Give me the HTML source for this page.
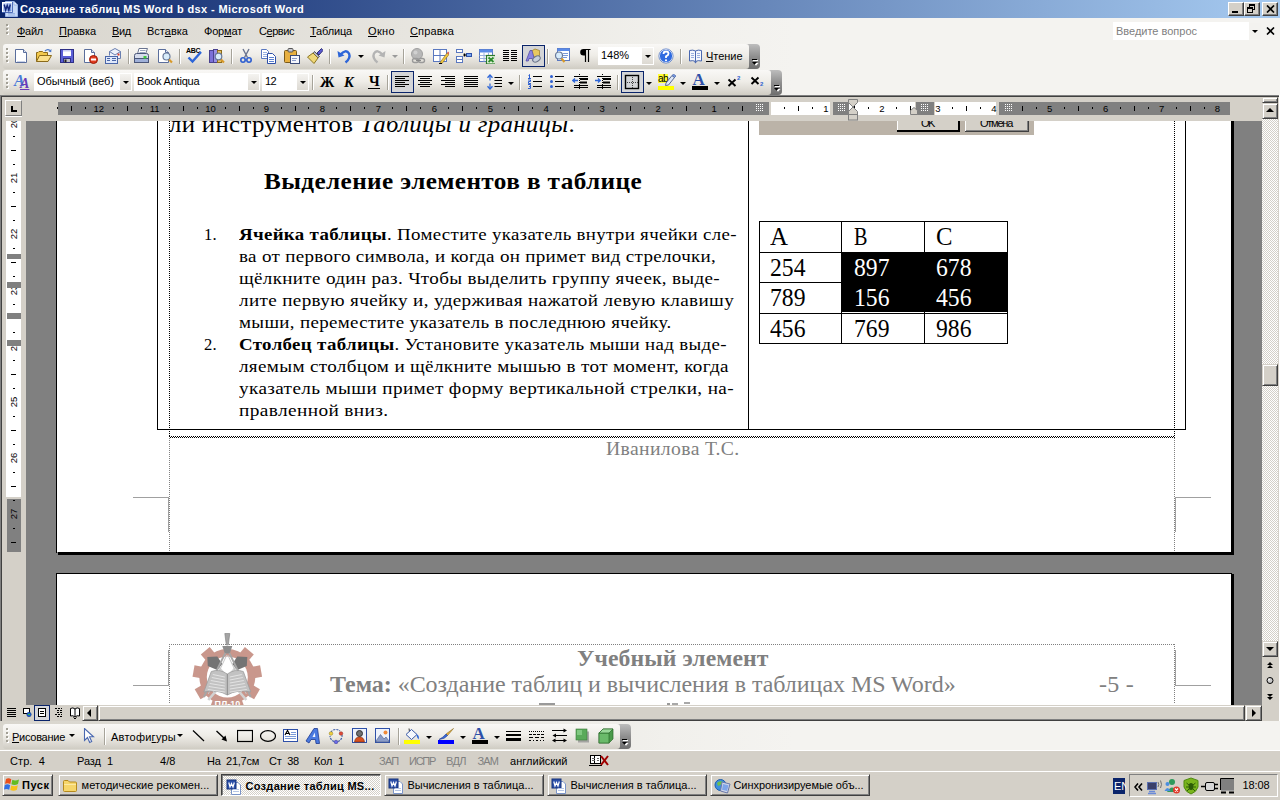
<!DOCTYPE html>
<html lang="ru"><head>
<meta charset="utf-8">
<title>Word</title>
<style>
*{box-sizing:border-box;margin:0;padding:0}
html,body{width:1280px;height:800px;overflow:hidden;background:#d4d0c8}
body{font-family:"Liberation Sans",sans-serif;font-size:11px;color:#000;position:relative}
#root{position:absolute;left:0;top:0;width:1280px;height:800px;overflow:hidden;background:#d4d0c8}
.a{position:absolute}
.t{position:absolute;white-space:nowrap;line-height:1}
.ui{font-family:"Liberation Sans",sans-serif;font-size:11px}
.sf{font-family:"Liberation Serif",serif}
u{text-decoration:underline;text-underline-offset:1px}
/* title */
#title{left:0;top:0;width:1280px;height:18px;background:linear-gradient(to right,#0a246a,#a6caf0)}
.wb{position:absolute;top:2px;width:16px;height:14px;background:#d4d0c8;border:1px solid;border-color:#fff #404040 #404040 #fff;box-shadow:inset -1px -1px 0 #808080}
/* dock */
#dock{left:0;top:18px;width:1280px;height:78px;background:linear-gradient(to right,#d8d5cd 0,#e6e4de 30%,#f1f0ec 52%,#f4f3f0 62%,#f4f3f0 100%)}
.tb{position:absolute;height:25px;border-radius:3px 4px 4px 3px;background:linear-gradient(to bottom,#f9f8f6 0,#efede8 45%,#dcd9d2 80%,#cfccc3 100%)}
.cap::before{content:"";position:absolute;left:-3px;top:0;width:6px;height:25px;border-radius:0 3px 3px 0;background:linear-gradient(to bottom,#f9f8f6 0,#efede8 45%,#dcd9d2 80%,#cfccc3 100%)}
.cap{position:absolute;top:0;right:0;width:14px;height:25px;border-radius:0 4px 4px 0;background:linear-gradient(to bottom,#bdbdbd 0,#8f8f8f 50%,#6e6e6e 100%)}
.grip{position:absolute;width:3px;height:15px;background:repeating-linear-gradient(to bottom,#a29f95 0,#a29f95 2px,transparent 2px,transparent 4px) 0 0/2px 100% no-repeat,repeating-linear-gradient(to bottom,#fff 0,#fff 2px,transparent 2px,transparent 4px) 1px 1px/2px 100% no-repeat}
.sep{position:absolute;width:2px;height:17px;border-left:1px solid #a6a399;border-right:1px solid #fff}
.combo{position:absolute;height:19px;background:#fff;border:0}
.dd{position:absolute;top:1px;right:1px;width:12px;height:17px;background:linear-gradient(to bottom,#f6f5f2,#dedbd4)}
.arr{position:absolute;width:0;height:0;border-left:3px solid transparent;border-right:3px solid transparent;border-top:3px solid #000}
.btn{background:#d4d0c8;border:1px solid;border-color:#d4d0c8 #404040 #404040 #d4d0c8;box-shadow:inset 1px 1px 0 #fff,inset -1px -1px 0 #808080}
/* doc */
#docwrap{left:0;top:95px;width:1280px;height:627px;background:#d4d0c8}
#gray{left:26px;top:121px;width:1236px;height:584px;background:#808080;overflow:hidden}
.page{position:absolute;background:#fff}
</style>
</head>
<body>
<div id="root">

<!-- TITLE BAR -->
<div id="title" class="a">
  <div class="t" style="left: 20px; top: 4px; font-size: 11px; font-weight: bold; color: rgb(255, 255, 255); --w: 284px; letter-spacing: 0.38px;">Создание таблиц MS Word b dsx - Microsoft Word</div>
  <svg class="a" style="left:2px;top:1px" width="16" height="16" viewBox="0 0 16 16"><defs><linearGradient id="wg" x1="0" y1="0" x2="1" y2="1"><stop offset="0" stop-color="#e8f0ff"></stop><stop offset="1" stop-color="#5a84dc"></stop></linearGradient></defs><path d="M3.500 0.500 H12 L15.500 4 V15.500 H3.500 Z" fill="#c6d8f6" stroke="#9ab4e6"></path><path d="M12 0.500 V4 H15.500" fill="#eef4ff" stroke="#9ab4e6"></path><path d="M6 12.500H13M6 14H13" stroke="#8aa8e0" stroke-width=".800"></path><rect x="0.500" y="1.500" width="9.500" height="9.500" fill="url(#wg)" stroke="#fff"></rect><path d="M2.200 3.500 L3.600 9 L5.200 4.500 L6.800 9 L8.300 3.500" stroke="#14287c" stroke-width="1.500" fill="none"></path><path d="M0 11.500 H10.500 V1" stroke="#2a4ea8" fill="none" stroke-width=".800"></path></svg>
  <div class="wb" style="left:1228px"><div class="a" style="left:3px;top:8px;width:6px;height:2px;background:#000"></div></div>
  <div class="wb" style="left:1244px"><div class="a" style="left:4px;top:1px;width:6px;height:6px;border:1px solid #000;border-top-width:2px"></div><div class="a" style="left:2px;top:4px;width:6px;height:6px;border:1px solid #000;border-top-width:2px;background:#d4d0c8"></div></div>
  <div class="wb" style="left:1262px"><svg class="a" style="left:3px;top:2px" width="9" height="8" viewBox="0 0 9 8"><path d="M1 0.500 L8 7.500 M8 0.500 L1 7.500" stroke="#000" stroke-width="1.700" fill="none"></path></svg></div>
</div>

<!-- DOCK (menu + toolbars) -->
<div id="dock" class="a">
  <!-- menu row (dock top=18) -->
  <div class="grip" style="left:6px;top:6px;height:12px"></div>
  <div class="t ui" style="left: 17px; top: 8px; --w: 26px; letter-spacing: -0.27px;"><u>Ф</u>айл</div><div class="t ui" style="left: 59px; top: 8px; --w: 37px; letter-spacing: -0.03px;"><u>П</u>равка</div><div class="t ui" style="left: 112px; top: 8px; --w: 19px; letter-spacing: -0.31px;"><u>В</u>ид</div><div class="t ui" style="left: 147px; top: 8px; --w: 41px; letter-spacing: 0.01px;">Вст<u>а</u>вка</div><div class="t ui" style="left: 204px; top: 8px; --w: 38px; letter-spacing: -0.18px;">Фор<u>м</u>ат</div><div class="t ui" style="left: 259px; top: 8px; --w: 35px; letter-spacing: -0.45px;">С<u>е</u>рвис</div><div class="t ui" style="left: 310px; top: 8px; --w: 42px; letter-spacing: -0.16px;"><u>Т</u>аблица</div><div class="t ui" style="left: 368px; top: 8px; --w: 27px; letter-spacing: 0.36px;"><u>О</u>кно</div><div class="t ui" style="left: 410px; top: 8px; --w: 44px; letter-spacing: 0.12px;"><u>С</u>правка</div>
  <div class="a" style="left:1113px;top:4px;width:136px;height:18px;background:#fff"></div>
  <div class="t ui" style="left: 1116px; top: 8px; color: rgb(128, 128, 128); --w: 81px; letter-spacing: -0.01px;">Введите вопрос</div>
  <div class="a" style="left:1249px;top:5px;width:12px;height:16px;background:#f3f2ef"></div>
  <div class="arr" style="left:1252px;top:12px"></div>
  <svg class="a" style="left:1266px;top:9px" width="9" height="8" viewBox="0 0 9 8"><path d="M1 0.5 L8 7.5 M8 0.5 L1 7.5" stroke="#000" stroke-width="1.6" fill="none"></path></svg>

  <!-- toolbar 1: abs y=44 => dock y=26 -->
  <div id="tb1" class="tb" style="left:3px;top:26px;width:757px">
    <div class="grip" style="left:3px;top:4px;height:16px"></div>
    <div class="cap"></div>
  </div>
  <!-- toolbar 2: abs y=70 => dock y=52 -->
  <div id="tb2" class="tb" style="left:3px;top:52px;width:779px">
    <div class="grip" style="left:3px;top:4px;height:16px"></div>
    <div class="cap"></div>
  </div>
</div>

<!-- DOCUMENT AREA -->
<div id="docwrap" class="a"></div>
<!-- DOC-START -->
<div class="a" style="left:0;top:95px;width:1280px;height:1px;background:#808080"></div>
<div class="a" style="left:1px;top:96px;width:1278px;height:1px;background:#404040"></div>
<div class="a" style="left:0;top:95px;width:1px;height:627px;background:#808080"></div>
<div class="a" style="left:1px;top:96px;width:1px;height:625px;background:#404040"></div>
<div class="a" style="left:1279px;top:95px;width:1px;height:627px;background:#fff"></div>
<div id="hruler" class="a" style="left:0;top:97px;width:1262px;height:24px;overflow:hidden">
<div class="a" style="left:5px;top:3px;width:17px;height:16px;border:1px solid;border-color:#fff #808080 #808080 #fff;background:#d4d0c8"></div>
<div class="a" style="left:11px;top:9px;width:2px;height:6px;background:#000"></div><div class="a" style="left:11px;top:13px;width:6px;height:2px;background:#000"></div><div class="a" style="left:5px;top:19px;width:17px;height:1px;background:#fff"></div><div class="a" style="left:57px;top:10px;width:1px;height:2px;background:#000"></div>
<div class="a" style="left:58px;top:5px;width:711px;height:13px;background:#808080"></div>
<div class="a" style="left:771px;top:5px;width:59px;height:13px;background:#fff"></div>
<div class="a" style="left:833px;top:5px;width:16px;height:13px;background:#808080"></div>
<div class="a" style="left:849px;top:5px;width:66px;height:13px;background:#fff"></div>
<div class="a" style="left:916px;top:5px;width:18px;height:13px;background:#808080"></div>
<div class="a" style="left:935px;top:5px;width:61px;height:13px;background:#fff"></div>
<div class="a" style="left:999px;top:5px;width:231px;height:13px;background:#808080"></div>
<div class="a" style="left:71px;top:9px;width:1px;height:5px;background:#000"></div>
<div class="a" style="left:85px;top:10px;width:1px;height:2px;background:#000"></div>
<div class="t ui" style="left:88.7px;top:7px;width:20px;text-align:center;font-size:9.500px">12</div>
<div class="a" style="left:113px;top:10px;width:1px;height:2px;background:#000"></div>
<div class="a" style="left:127px;top:9px;width:1px;height:5px;background:#000"></div>
<div class="a" style="left:141px;top:10px;width:1px;height:2px;background:#000"></div>
<div class="t ui" style="left:144.7px;top:7px;width:20px;text-align:center;font-size:9.500px">11</div>
<div class="a" style="left:169px;top:10px;width:1px;height:2px;background:#000"></div>
<div class="a" style="left:183px;top:9px;width:1px;height:5px;background:#000"></div>
<div class="a" style="left:197px;top:10px;width:1px;height:2px;background:#000"></div>
<div class="t ui" style="left:200.6px;top:7px;width:20px;text-align:center;font-size:9.500px">10</div>
<div class="a" style="left:225px;top:10px;width:1px;height:2px;background:#000"></div>
<div class="a" style="left:239px;top:9px;width:1px;height:5px;background:#000"></div>
<div class="a" style="left:253px;top:10px;width:1px;height:2px;background:#000"></div>
<div class="t ui" style="left:256.5px;top:7px;width:20px;text-align:center;font-size:9.500px">9</div>
<div class="a" style="left:281px;top:10px;width:1px;height:2px;background:#000"></div>
<div class="a" style="left:295px;top:9px;width:1px;height:5px;background:#000"></div>
<div class="a" style="left:308px;top:10px;width:1px;height:2px;background:#000"></div>
<div class="t ui" style="left:312.5px;top:7px;width:20px;text-align:center;font-size:9.500px">8</div>
<div class="a" style="left:336px;top:10px;width:1px;height:2px;background:#000"></div>
<div class="a" style="left:350px;top:9px;width:1px;height:5px;background:#000"></div>
<div class="a" style="left:364px;top:10px;width:1px;height:2px;background:#000"></div>
<div class="t ui" style="left:368.4px;top:7px;width:20px;text-align:center;font-size:9.500px">7</div>
<div class="a" style="left:392px;top:10px;width:1px;height:2px;background:#000"></div>
<div class="a" style="left:406px;top:9px;width:1px;height:5px;background:#000"></div>
<div class="a" style="left:420px;top:10px;width:1px;height:2px;background:#000"></div>
<div class="t ui" style="left:424.4px;top:7px;width:20px;text-align:center;font-size:9.500px">6</div>
<div class="a" style="left:448px;top:10px;width:1px;height:2px;background:#000"></div>
<div class="a" style="left:462px;top:9px;width:1px;height:5px;background:#000"></div>
<div class="a" style="left:476px;top:10px;width:1px;height:2px;background:#000"></div>
<div class="t ui" style="left:480.3px;top:7px;width:20px;text-align:center;font-size:9.500px">5</div>
<div class="a" style="left:504px;top:10px;width:1px;height:2px;background:#000"></div>
<div class="a" style="left:518px;top:9px;width:1px;height:5px;background:#000"></div>
<div class="a" style="left:532px;top:10px;width:1px;height:2px;background:#000"></div>
<div class="t ui" style="left:536.2px;top:7px;width:20px;text-align:center;font-size:9.500px">4</div>
<div class="a" style="left:560px;top:10px;width:1px;height:2px;background:#000"></div>
<div class="a" style="left:574px;top:9px;width:1px;height:5px;background:#000"></div>
<div class="a" style="left:588px;top:10px;width:1px;height:2px;background:#000"></div>
<div class="t ui" style="left:592.2px;top:7px;width:20px;text-align:center;font-size:9.500px">3</div>
<div class="a" style="left:616px;top:10px;width:1px;height:2px;background:#000"></div>
<div class="a" style="left:630px;top:9px;width:1px;height:5px;background:#000"></div>
<div class="a" style="left:644px;top:10px;width:1px;height:2px;background:#000"></div>
<div class="t ui" style="left:648.1px;top:7px;width:20px;text-align:center;font-size:9.500px">2</div>
<div class="a" style="left:672px;top:10px;width:1px;height:2px;background:#000"></div>
<div class="a" style="left:686px;top:9px;width:1px;height:5px;background:#000"></div>
<div class="a" style="left:700px;top:10px;width:1px;height:2px;background:#000"></div>
<div class="t ui" style="left:704.1px;top:7px;width:20px;text-align:center;font-size:9.500px">1</div>
<div class="a" style="left:728px;top:10px;width:1px;height:2px;background:#000"></div>
<div class="a" style="left:742px;top:9px;width:1px;height:5px;background:#000"></div>
<div class="a" style="left:756px;top:10px;width:1px;height:2px;background:#000"></div>
<div class="a" style="left:784px;top:10px;width:1px;height:2px;background:#000"></div>
<div class="a" style="left:798px;top:9px;width:1px;height:5px;background:#000"></div>
<div class="a" style="left:812px;top:10px;width:1px;height:2px;background:#000"></div>
<div class="t ui" style="left:815.9px;top:7px;width:20px;text-align:center;font-size:9.500px">1</div>
<div class="a" style="left:840px;top:10px;width:1px;height:2px;background:#000"></div>
<div class="a" style="left:854px;top:9px;width:1px;height:5px;background:#000"></div>
<div class="a" style="left:868px;top:10px;width:1px;height:2px;background:#000"></div>
<div class="t ui" style="left:871.9px;top:7px;width:20px;text-align:center;font-size:9.500px">2</div>
<div class="a" style="left:896px;top:10px;width:1px;height:2px;background:#000"></div>
<div class="a" style="left:910px;top:9px;width:1px;height:5px;background:#000"></div>
<div class="a" style="left:924px;top:10px;width:1px;height:2px;background:#000"></div>
<div class="t ui" style="left:927.8px;top:7px;width:20px;text-align:center;font-size:9.500px">3</div>
<div class="a" style="left:952px;top:10px;width:1px;height:2px;background:#000"></div>
<div class="a" style="left:966px;top:9px;width:1px;height:5px;background:#000"></div>
<div class="a" style="left:980px;top:10px;width:1px;height:2px;background:#000"></div>
<div class="t ui" style="left:983.8px;top:7px;width:20px;text-align:center;font-size:9.500px">4</div>
<div class="a" style="left:1008px;top:10px;width:1px;height:2px;background:#000"></div>
<div class="a" style="left:1022px;top:9px;width:1px;height:5px;background:#000"></div>
<div class="a" style="left:1036px;top:10px;width:1px;height:2px;background:#000"></div>
<div class="t ui" style="left:1039.7px;top:7px;width:20px;text-align:center;font-size:9.500px">5</div>
<div class="a" style="left:1064px;top:10px;width:1px;height:2px;background:#000"></div>
<div class="a" style="left:1078px;top:9px;width:1px;height:5px;background:#000"></div>
<div class="a" style="left:1092px;top:10px;width:1px;height:2px;background:#000"></div>
<div class="t ui" style="left:1095.6px;top:7px;width:20px;text-align:center;font-size:9.500px">6</div>
<div class="a" style="left:1120px;top:10px;width:1px;height:2px;background:#000"></div>
<div class="a" style="left:1134px;top:9px;width:1px;height:5px;background:#000"></div>
<div class="a" style="left:1148px;top:10px;width:1px;height:2px;background:#000"></div>
<div class="t ui" style="left:1151.6px;top:7px;width:20px;text-align:center;font-size:9.500px">7</div>
<div class="a" style="left:1176px;top:10px;width:1px;height:2px;background:#000"></div>
<div class="a" style="left:1190px;top:9px;width:1px;height:5px;background:#000"></div>
<div class="a" style="left:1204px;top:10px;width:1px;height:2px;background:#000"></div>
<div class="t ui" style="left:1207.5px;top:7px;width:20px;text-align:center;font-size:9.500px">8</div>
<div class="a" style="left:756px;top:7px;width:8px;height:8px;background:conic-gradient(from 270deg,#fff 25%,#808080 0) 0 0/2px 2px"></div>
<div class="a" style="left:838px;top:7px;width:8px;height:8px;background:conic-gradient(from 270deg,#fff 25%,#808080 0) 0 0/2px 2px"></div>
<div class="a" style="left:921px;top:7px;width:8px;height:8px;background:conic-gradient(from 270deg,#fff 25%,#808080 0) 0 0/2px 2px"></div>
<div class="a" style="left:1005px;top:7px;width:8px;height:8px;background:conic-gradient(from 270deg,#fff 25%,#808080 0) 0 0/2px 2px"></div>
<svg class="a" style="left:848px;top:2px" width="11" height="22" viewBox="0 0 11 22"><path d="M0.5 0.5 H9.5 V3.5 L5 8 L9.5 12.5 V15.5 H0.5 V12.5 L5 8 L0.5 3.5 Z" fill="#d4d0c8" stroke="#808080"></path><rect x="0.5" y="15.5" width="9" height="5.5" fill="#d4d0c8" stroke="#808080"></rect></svg>
<svg class="a" style="left:910px;top:10px" width="9" height="8" viewBox="0 0 9 8"><path d="M0.5 7.5 V3.5 L4 0.5 L7.5 3.5 V7.5 Z" fill="#d4d0c8" stroke="#808080"></path></svg>
</div>
<div id="vruler" class="a" style="left:2px;top:121px;width:24px;height:584px;overflow:hidden">
<div class="a" style="left:4px;top:0;width:15px;height:376px;background:#fff"></div>
<div class="a" style="left:5px;top:378px;width:14px;height:53px;background:#808080"></div>
<div class="t ui" style="left:1.5px;top:-4.5px;width:20px;height:12px;line-height:12px;text-align:center;font-size:9.500px;transform:rotate(-90deg)">20</div>
<div class="a" style="left:11px;top:15px;width:2px;height:1px;background:#000"></div>
<div class="a" style="left:9px;top:29px;width:5px;height:1px;background:#000"></div>
<div class="a" style="left:11px;top:43px;width:2px;height:1px;background:#000"></div>
<div class="t ui" style="left:1.5px;top:51.4px;width:20px;height:12px;line-height:12px;text-align:center;font-size:9.500px;transform:rotate(-90deg)">21</div>
<div class="a" style="left:11px;top:71px;width:2px;height:1px;background:#000"></div>
<div class="a" style="left:9px;top:85px;width:5px;height:1px;background:#000"></div>
<div class="a" style="left:11px;top:99px;width:2px;height:1px;background:#000"></div>
<div class="t ui" style="left:1.5px;top:107.4px;width:20px;height:12px;line-height:12px;text-align:center;font-size:9.500px;transform:rotate(-90deg)">22</div>
<div class="a" style="left:11px;top:127px;width:2px;height:1px;background:#000"></div>
<div class="a" style="left:9px;top:141px;width:5px;height:1px;background:#000"></div>
<div class="a" style="left:11px;top:155px;width:2px;height:1px;background:#000"></div>
<div class="t ui" style="left:1.5px;top:163.3px;width:20px;height:12px;line-height:12px;text-align:center;font-size:9.500px;transform:rotate(-90deg)">23</div>
<div class="a" style="left:11px;top:183px;width:2px;height:1px;background:#000"></div>
<div class="a" style="left:9px;top:197px;width:5px;height:1px;background:#000"></div>
<div class="a" style="left:11px;top:211px;width:2px;height:1px;background:#000"></div>
<div class="t ui" style="left:1.5px;top:219.3px;width:20px;height:12px;line-height:12px;text-align:center;font-size:9.500px;transform:rotate(-90deg)">24</div>
<div class="a" style="left:11px;top:239px;width:2px;height:1px;background:#000"></div>
<div class="a" style="left:9px;top:253px;width:5px;height:1px;background:#000"></div>
<div class="a" style="left:11px;top:267px;width:2px;height:1px;background:#000"></div>
<div class="t ui" style="left:1.5px;top:275.2px;width:20px;height:12px;line-height:12px;text-align:center;font-size:9.500px;transform:rotate(-90deg)">25</div>
<div class="a" style="left:11px;top:295px;width:2px;height:1px;background:#000"></div>
<div class="a" style="left:9px;top:309px;width:5px;height:1px;background:#000"></div>
<div class="a" style="left:11px;top:323px;width:2px;height:1px;background:#000"></div>
<div class="t ui" style="left:1.5px;top:331.1px;width:20px;height:12px;line-height:12px;text-align:center;font-size:9.500px;transform:rotate(-90deg)">26</div>
<div class="a" style="left:11px;top:351px;width:2px;height:1px;background:#000"></div>
<div class="a" style="left:9px;top:365px;width:5px;height:1px;background:#000"></div>
<div class="a" style="left:11px;top:379px;width:2px;height:1px;background:#000"></div>
<div class="t ui" style="left:1.5px;top:387.1px;width:20px;height:12px;line-height:12px;text-align:center;font-size:9.500px;transform:rotate(-90deg)">27</div>
<div class="a" style="left:11px;top:407px;width:2px;height:1px;background:#000"></div>
<div class="a" style="left:9px;top:421px;width:5px;height:1px;background:#000"></div>
<div class="a" style="left:5px;top:133px;width:14px;height:5px;background:#808080"></div>
<div class="a" style="left:5px;top:161px;width:14px;height:6px;background:#808080"></div>
<div class="a" style="left:5px;top:192px;width:14px;height:6px;background:#808080"></div>
<div class="a" style="left:5px;top:219px;width:14px;height:6px;background:#808080"></div>
</div>
<div id="gray" class="a">
<div class="a" style="left:30px;top:0px;width:1px;height:432px;background:#000;"></div>
<div class="a" style="left:31px;top:0px;width:1174px;height:431px;background:#fff;"></div>
<div class="a" style="left:1205px;top:0px;width:3px;height:434px;background:#000;"></div>
<div class="a" style="left:32px;top:431px;width:1176px;height:3px;background:#000;"></div>
<div class="a" style="left:30px;top:452px;width:1176px;height:1px;background:#000;"></div>
<div class="a" style="left:30px;top:452px;width:1px;height:140px;background:#000;"></div>
<div class="a" style="left:31px;top:453px;width:1174px;height:140px;background:#fff;"></div>
<div class="a" style="left:1205px;top:453px;width:3px;height:140px;background:#000;"></div>
<div class="a" style="left:131px;top:0px;width:1px;height:309px;background:#000;"></div>
<div class="a" style="left:722px;top:0px;width:1px;height:309px;background:#000;"></div>
<div class="a" style="left:1159px;top:0px;width:1px;height:309px;background:#000;"></div>
<div class="a" style="left:131px;top:308px;width:1029px;height:1px;background:#000;"></div>
<div class="a" style="left:143px;top:0px;width:1px;height:315px;background:transparent;background-image:linear-gradient(to bottom,#000 50%,transparent 50%);background-size:1px 2px"></div>
<div class="a" style="left:1148px;top:0px;width:1px;height:315px;background:transparent;background-image:linear-gradient(to bottom,#000 50%,transparent 50%);background-size:1px 2px"></div>
<div class="a" style="left:143px;top:315px;width:1006px;height:1px;background:transparent;background-image:linear-gradient(to right,#000 50%,transparent 50%);background-size:2px 1px"></div>
<div class="a" style="left:144px;top:316px;width:1006px;height:1px;background:transparent;background-image:linear-gradient(to right,#000 50%,transparent 50%);background-size:2px 1px"></div>
<div class="a" style="left:143px;top:317px;width:1px;height:113px;background:transparent;background-image:linear-gradient(to bottom,#808080 50%,transparent 50%);background-size:1px 2px"></div>
<div class="a" style="left:1148px;top:317px;width:1px;height:113px;background:transparent;background-image:linear-gradient(to bottom,#808080 50%,transparent 50%);background-size:1px 2px"></div>
<div class="a" style="left:107px;top:376px;width:36px;height:1px;background:#a0a0a0;"></div>
<div class="a" style="left:142px;top:376px;width:1px;height:35px;background:#a0a0a0;"></div>
<div class="a" style="left:1149px;top:376px;width:36px;height:1px;background:#a0a0a0;"></div>
<div class="a" style="left:1149px;top:376px;width:1px;height:35px;background:#a0a0a0;"></div>
<div class="a" style="left:143px;top:523px;width:1006px;height:1px;background:transparent;background-image:linear-gradient(to right,#808080 50%,transparent 50%);background-size:2px 1px"></div>
<div class="a" style="left:143px;top:523px;width:1px;height:60px;background:transparent;background-image:linear-gradient(to bottom,#808080 50%,transparent 50%);background-size:1px 2px"></div>
<div class="a" style="left:1148px;top:523px;width:1px;height:60px;background:transparent;background-image:linear-gradient(to bottom,#808080 50%,transparent 50%);background-size:1px 2px"></div>
<div class="a" style="left:107px;top:564px;width:36px;height:1px;background:#a0a0a0;"></div>
<div class="a" style="left:142px;top:529px;width:1px;height:36px;background:#a0a0a0;"></div>
<div class="a" style="left:1149px;top:564px;width:36px;height:1px;background:#a0a0a0;"></div>
<div class="a" style="left:1149px;top:529px;width:1px;height:36px;background:#a0a0a0;"></div>
<div class="a" style="left:733px;top:0px;width:275px;height:14px;background:#bbb3a8;"></div>
<div class="a" style="left:871px;top:0px;width:63px;height:11px;background:#d4d0c8;border:solid #000;border-width:0 2px 2px 0;box-shadow:inset 1px 0 0 #fff"></div>
<div class="a" style="left:939px;top:0px;width:64px;height:11px;background:#d4d0c8;border:solid #404040;border-width:0 1px 1px 0;box-shadow:inset 1px 0 0 #fff,inset -1px -1px 0 #808080"></div>
<div class="t ui" style="left: 895px; top: -3.3px; font-size: 11px; --w: 13px; letter-spacing: -1.45px;">OK</div>
<div class="t ui" style="left: 954px; top: -3.3px; font-size: 11px; --w: 32px; letter-spacing: -1.24px;">Отмена</div>
<div class="a" style="left:733px;top:100px;width:249px;height:1px;background:#000;"></div>
<div class="a" style="left:733px;top:131px;width:249px;height:1px;background:#000;"></div>
<div class="a" style="left:733px;top:161px;width:83px;height:1px;background:#000;"></div>
<div class="a" style="left:733px;top:192px;width:249px;height:1px;background:#000;"></div>
<div class="a" style="left:733px;top:222px;width:249px;height:1px;background:#000;"></div>
<div class="a" style="left:733px;top:100px;width:1px;height:123px;background:#000;"></div>
<div class="a" style="left:815px;top:100px;width:1px;height:123px;background:#000;"></div>
<div class="a" style="left:898px;top:100px;width:1px;height:123px;background:#000;"></div>
<div class="a" style="left:981px;top:100px;width:1px;height:123px;background:#000;"></div>
<div class="a" style="left:816px;top:132px;width:166px;height:59px;background:#000;"></div>
<svg class="a" style="left:163px;top:509px" width="78" height="80" viewBox="-38.300 -47 78 80"><g fill="#c9978c"><rect x="-5.800" y="-34.300" width="11.600" height="9" transform="rotate(40)"></rect><rect x="-5.800" y="-34.300" width="11.600" height="9" transform="rotate(80)"></rect><rect x="-5.800" y="-34.300" width="11.600" height="9" transform="rotate(120)"></rect><rect x="-5.800" y="-34.300" width="11.600" height="9" transform="rotate(160)"></rect><rect x="-5.800" y="-34.300" width="11.600" height="9" transform="rotate(200)"></rect><rect x="-5.800" y="-34.300" width="11.600" height="9" transform="rotate(240)"></rect><rect x="-5.800" y="-34.300" width="11.600" height="9" transform="rotate(280)"></rect><rect x="-5.800" y="-34.300" width="11.600" height="9" transform="rotate(320)"></rect><circle r="28"></circle></g><circle r="20.500" fill="#fff"></circle><path d="M-9 -10 L19 23 M9 -10 L-19 23" stroke="#d2d2d2" stroke-width="2.600"></path><path d="M-20 -20 L-10 -20.500 L-5 -13 L-10 -7 L-19.500 -11 Z M20 -20 L10 -20.500 L5 -13 L10 -7 L19.500 -11 Z" fill="#747474"></path><path d="M-2.500 -43.500 H2.500 L1 -32 H-1 Z" fill="#a4a4a4" stroke="#7c7c7c" stroke-width=".600"></path><path d="M-5 -31 H5 L2.500 -23.500 H-2.500 Z" fill="#8c8c8c"></path><path d="M-2 -24 L-23.500 20 M2 -24 L23.500 20" stroke="#a6a6a6" stroke-width="1.800"></path><path d="M-0.500 -22 L-19 17 M0.500 -22 L19 17" stroke="#c6c6c6" stroke-width="1"></path><path d="M0 -3 Q-8 -8.500 -16 -5.500 L-23.500 15 Q-10 12 0 18 Q10 12 23.500 15 L16 -5.500 Q8 -8.500 0 -3 Z" fill="#c2c2c2" stroke="#9c9c9c" stroke-width=".800"></path><path d="M0 -3 V18" stroke="#8a8a8a"></path><path d="M-14.500 -2.500 L-2.500 0 M-15.500 0.500 L-2.500 3 M-16.500 3.500 L-2.500 6 M-17.500 6.500 L-2.500 9 M-18.500 9.500 L-2.500 12 M-19.500 12.500 L-2.500 15 M14.500 -2.500 L2.500 0 M15.500 0.500 L2.500 3 M16.500 3.500 L2.500 6 M17.500 6.500 L2.500 9 M18.500 9.500 L2.500 12 M19.500 12.500 L2.500 15" stroke="#e6e6e6" stroke-width=".900"></path><text x="0" y="29.500" text-anchor="middle" font-family="Liberation Sans, sans-serif" font-size="9" font-weight="bold" fill="#fff">ПЛ-10</text></svg>
<div class="a" style="left:513px;top:582px;width:16px;height:2px;background:#9a9a9a;"></div>
<div class="a" style="left:641px;top:582px;width:3px;height:2px;background:#9a9a9a;"></div>
<div class="a" style="left:646px;top:582px;width:6px;height:2px;background:#a8a8a8;"></div>
<div class="a" style="left:658px;top:581px;width:6px;height:2px;background:#a8a8a8;"></div>
<div class="a" style="left:0;top:0">
<div class="t sf" style="left: 143px; top: -6.7px; font-size: 22.3px; --w: 406px; --sx: 0.8; letter-spacing: 0.3px; transform-origin: 0px 0px; transform: scaleX(1.113);">ли инструментов <i>Таблицы и границы</i>.</div>
<div class="t sf" style="left: 238px; top: 50.2px; font-size: 22.5px; font-weight: bold; --w: 378px; --sx: 0.8; letter-spacing: 0.35px; transform-origin: 0px 0px; transform: scaleX(1.121);">Выделение элементов в таблице</div>
<div class="t sf" style="left: 213px; top: 106.1px; font-size: 16.6px; --w: 498px; --sx: 0.8; letter-spacing: 0.28px; transform-origin: 0px 0px; transform: scaleX(1.139);"><b>Ячейка таблицы</b>. Поместите указатель внутри ячейки сле-</div>
<div class="t sf" style="left: 213px; top: 128.1px; font-size: 16.6px; --w: 477px; --sx: 0.8; letter-spacing: 0.28px; transform-origin: 0px 0px; transform: scaleX(1.146);">ва от первого символа, и когда он примет вид стрелочки,</div>
<div class="t sf" style="left: 213px; top: 150.1px; font-size: 16.6px; --w: 481px; --sx: 0.8; letter-spacing: 0.29px; transform-origin: 0px 0px; transform: scaleX(1.149);">щёлкните один раз. Чтобы выделить группу ячеек, выде-</div>
<div class="t sf" style="left: 213px; top: 172.1px; font-size: 16.6px; --w: 495px; --sx: 0.8; letter-spacing: 0.31px; transform-origin: 0px 0px; transform: scaleX(1.153);">лите первую ячейку и, удерживая нажатой левую клавишу</div>
<div class="t sf" style="left: 213px; top: 194.1px; font-size: 16.6px; --w: 432.5px; --sx: 0.8; letter-spacing: 0.29px; transform-origin: 0px 0px; transform: scaleX(1.142);">мыши, переместите указатель в последнюю ячейку.</div>
<div class="t sf" style="left: 213px; top: 216.1px; font-size: 16.6px; --w: 488px; --sx: 0.8; letter-spacing: 0.29px; transform-origin: 0px 0px; transform: scaleX(1.139);"><b>Столбец таблицы</b>. Установите указатель мыши над выде-</div>
<div class="t sf" style="left: 213px; top: 238.1px; font-size: 16.6px; --w: 490px; --sx: 0.8; letter-spacing: 0.31px; transform-origin: 0px 0px; transform: scaleX(1.149);">ляемым столбцом и щёлкните мышью в тот момент, когда</div>
<div class="t sf" style="left: 213px; top: 259.6px; font-size: 16.6px; --w: 495px; --sx: 0.8; letter-spacing: 0.32px; transform-origin: 0px 0px; transform: scaleX(1.157);">указатель мыши примет форму вертикальной стрелки, на-</div>
<div class="t sf" style="left: 213px; top: 281.6px; font-size: 16.6px; --w: 149.5px; --sx: 0.8; letter-spacing: 0.33px; transform-origin: 0px 0px; transform: scaleX(1.164);">правленной вниз.</div>
<div class="t sf" style="left: 178px; top: 106.1px; font-size: 16.6px; --w: 13px; letter-spacing: 0.27px;">1.</div>
<div class="t sf" style="left: 178px; top: 216.1px; font-size: 16.6px; --w: 13px; letter-spacing: 0.27px;">2.</div>
<div class="t sf" style="left: 744px; top: 103.1px; font-size: 25.5px; color: rgb(0, 0, 0); --w: 18px; --sx: 1; letter-spacing: 0px; transform-origin: 0px 0px; transform: scaleX(0.977);">A</div>
<div class="t sf" style="left: 828px; top: 103.1px; font-size: 25.5px; color: rgb(0, 0, 0); --w: 13.5px; --sx: 1; letter-spacing: 0px; transform-origin: 0px 0px; transform: scaleX(0.793);">B</div>
<div class="t sf" style="left: 910px; top: 103.1px; font-size: 25.5px; color: rgb(0, 0, 0); --w: 16.5px; --sx: 1; letter-spacing: 0px; transform-origin: 0px 0px; transform: scaleX(0.97);">C</div>
<div class="t sf" style="left: 744px; top: 134.1px; font-size: 25.5px; color: rgb(0, 0, 0); --w: 35.5px; --sx: 1; letter-spacing: 0px; transform-origin: 0px 0px; transform: scaleX(0.928);">254</div>
<div class="t sf" style="left: 827.5px; top: 134.1px; font-size: 25.5px; color: rgb(255, 255, 255); --w: 35.5px; --sx: 1; letter-spacing: 0px; transform-origin: 0px 0px; transform: scaleX(0.928);">897</div>
<div class="t sf" style="left: 910px; top: 134.1px; font-size: 25.5px; color: rgb(255, 255, 255); --w: 35.5px; --sx: 1; letter-spacing: 0px; transform-origin: 0px 0px; transform: scaleX(0.928);">678</div>
<div class="t sf" style="left: 744px; top: 164.1px; font-size: 25.5px; color: rgb(0, 0, 0); --w: 35.5px; --sx: 1; letter-spacing: 0px; transform-origin: 0px 0px; transform: scaleX(0.928);">789</div>
<div class="t sf" style="left: 827.5px; top: 164.1px; font-size: 25.5px; color: rgb(255, 255, 255); --w: 35.5px; --sx: 1; letter-spacing: 0px; transform-origin: 0px 0px; transform: scaleX(0.928);">156</div>
<div class="t sf" style="left: 910px; top: 164.1px; font-size: 25.5px; color: rgb(255, 255, 255); --w: 35.5px; --sx: 1; letter-spacing: 0px; transform-origin: 0px 0px; transform: scaleX(0.928);">456</div>
<div class="t sf" style="left: 744px; top: 194.6px; font-size: 25.5px; color: rgb(0, 0, 0); --w: 35.5px; --sx: 1; letter-spacing: 0px; transform-origin: 0px 0px; transform: scaleX(0.928);">456</div>
<div class="t sf" style="left: 827.5px; top: 194.6px; font-size: 25.5px; color: rgb(0, 0, 0); --w: 35.5px; --sx: 1; letter-spacing: 0px; transform-origin: 0px 0px; transform: scaleX(0.928);">769</div>
<div class="t sf" style="left: 910px; top: 194.6px; font-size: 25.5px; color: rgb(0, 0, 0); --w: 35.5px; --sx: 1; letter-spacing: 0px; transform-origin: 0px 0px; transform: scaleX(0.928);">986</div>
<div class="t sf" style="left: 580px; top: 317.5px; font-size: 19.7px; color: rgb(128, 128, 128); --w: 133.5px; letter-spacing: 0.36px;">Иванилова Т.С.</div>
<div class="t sf" style="left: 551px; top: 526.2px; font-size: 23.7px; color: rgb(128, 128, 128); font-weight: bold; --w: 191.5px; letter-spacing: 0.08px;">Учебный элемент</div>
<div class="t sf" style="left: 304px; top: 551.4px; font-size: 24px; color: rgb(128, 128, 128); --w: 625.5px; letter-spacing: -0.04px;"><b>Тема:</b> «Создание таблиц и вычисления в таблицах MS Word»</div>
<div class="t sf" style="left: 1073px; top: 551.4px; font-size: 24px; color: rgb(128, 128, 128); --w: 35px; letter-spacing: 0.25px;">-5 -</div>
</div>
</div>
<!-- DOC-END -->
<!-- BOT-START -->
<div class="a" style="left:1262px;top:97px;width:16px;height:545px;background:#fff;background-color:#fff;background-image:conic-gradient(#d4d0c8 25%,#fff 0 50%,#d4d0c8 0 75%,#fff 0);background-size:2px 2px"></div>
<div class="a btn" style="left:1262px;top:97px;width:16px;height:6px"></div>
<div class="a btn" style="left:1262px;top:103px;width:16px;height:16px"><div class="a" style="left:3px;top:4px;width:0;height:0;border-left:4px solid transparent;border-right:4px solid transparent;border-bottom:4px solid #000"></div></div>
<div class="a btn" style="left:1262px;top:364px;width:16px;height:22px"></div>
<div class="a btn" style="left:1262px;top:641px;width:16px;height:16px"><div class="a" style="left:3px;top:5px;width:0;height:0;border-left:4px solid transparent;border-right:4px solid transparent;border-top:4px solid #000"></div></div>
<div class="a" style="left:1262px;top:657px;width:16px;height:48px;background:#d4d0c8;"></div>
<svg class="a" style="left:1265px;top:661px" width="10" height="42" viewBox="0 0 10 42"><path d="M5 1 L8 4 H2 Z M5 4 L8 7 H2 Z" fill="#000"></path><circle cx="5" cy="19.5" r="3" fill="#c8c8c8" stroke="#000" stroke-width="1"></circle><circle cx="4" cy="18.5" r="1" fill="#fff"></circle><path d="M2 33 H8 L5 36 Z M2 36 H8 L5 39 Z" fill="#000"></path></svg>
<div class="a" style="left:2px;top:705px;width:1276px;height:16px;background:#d4d0c8;"></div>
<svg class="a" style="left:6px;top:705px" width="76" height="16" viewBox="0 0 76 16"><path d="M1 3.500H10M1 5.500H10M1 7.500H10M1 9.500H10M1 11.500H10" stroke="#000"></path><rect x="17.500" y="3.500" width="6" height="5" fill="#fff" stroke="#000"></rect><circle cx="23" cy="9.500" r="2.200" fill="#1a5fd0" stroke="#103a8a" stroke-width=".600"></circle><path d="M22 9.500 H24" stroke="#3ac03a"></path><rect x="28.500" y="0.500" width="15" height="15" fill="#d6d7db" stroke="#0a246a"></rect><rect x="32.500" y="3.500" width="7" height="8" fill="#fff" stroke="#000"></rect><path d="M34 6.500H38M34 8.500H38" stroke="#000"></path><path d="M49 3.500H56M51 5.500H57M51 7.500H56M49 9.500H56M51 11.500H57" stroke="#000" stroke-dasharray="2 1"></path><path d="M64.500 3.500 Q67 2 69 4 Q71 2 73.500 3.500 V11 Q71 10 69 12 Q67 10 64.500 11 Z M69 4 V12" fill="#fff" stroke="#000"></path><path d="M67.500 12.500 L69 14 L70.500 12.500" fill="none" stroke="#000"></path></svg>
<div class="a btn" style="left:82px;top:705px;width:16px;height:16px"><div class="a" style="left:4px;top:3px;width:0;height:0;border-top:4px solid transparent;border-bottom:4px solid transparent;border-right:4px solid #000"></div></div>
<div class="a btn" style="left:98px;top:705px;width:1147px;height:16px"></div>
<div class="a btn" style="left:1245px;top:705px;width:17px;height:16px"><div class="a" style="left:6px;top:3px;width:0;height:0;border-top:4px solid transparent;border-bottom:4px solid transparent;border-left:4px solid #000"></div></div>
<div class="a" style="left:0px;top:721px;width:1280px;height:29px;background:transparent;background:linear-gradient(to right,#d8d5cd 0,#e6e4de 30%,#f1f0ec 52%,#f4f3f0 62%,#f4f3f0 100%)"></div>
<div id="tb3" class="tb" style="left:3px;top:724px;width:628px"><div class="grip" style="left:3px;top:4px;height:16px"></div><div class="cap"></div></div>
<div class="t ui" style="left: 12px; top: 731.7px; font-size: 11px; --w: 53px; letter-spacing: -0.27px;"><u>Р</u>исование</div>
<div class="arr" style="left:69px;top:734px"></div>
<div class="t ui" style="left: 111px; top: 731.7px; font-size: 11px; --w: 65px; letter-spacing: 0.24px;">Автофи<u>г</u>уры</div>
<div class="arr" style="left:177px;top:734px"></div>
<div class="a" style="left:104px;top:728px;width:1px;height:17px;background:#a6a399;"></div>
<div class="a" style="left:105px;top:728px;width:1px;height:17px;background:#fff;"></div>
<div class="a" style="left:398px;top:728px;width:1px;height:17px;background:#a6a399;"></div>
<div class="a" style="left:399px;top:728px;width:1px;height:17px;background:#fff;"></div>
<div class="a" style="left:0px;top:750px;width:1280px;height:1px;background:#fff;"></div>
<div class="a" style="left:0px;top:751px;width:1280px;height:22px;background:#d4d0c8;"></div>
<div class="t ui" style="left: 10px; top: 755.7px; font-size: 11px; --w: 35px; letter-spacing: 0.09px;">Стр.&nbsp; 4</div>
<div class="t ui" style="left: 77px; top: 755.7px; font-size: 11px; --w: 36px; letter-spacing: -0.06px;">Разд&nbsp; 1</div>
<div class="t ui" style="left: 160px; top: 755.7px; font-size: 11px; --w: 15.5px; letter-spacing: 0.07px;">4/8</div>
<div class="t ui" style="left: 207px; top: 755.7px; font-size: 11px; --w: 52px; letter-spacing: -0.27px;">На&nbsp; 21,7см</div>
<div class="t ui" style="left: 269px; top: 755.7px; font-size: 11px; --w: 30px; letter-spacing: -0.22px;">Ст&nbsp; 38</div>
<div class="t ui" style="left: 314px; top: 755.7px; font-size: 11px; --w: 30px; letter-spacing: -0.16px;">Кол&nbsp; 1</div>
<div class="t ui" style="left: 379px; top: 755.7px; font-size: 11px; color: rgb(128, 128, 128); --w: 19.5px; letter-spacing: -0.76px;">ЗАП</div>
<div class="t ui" style="left: 409px; top: 755.7px; font-size: 11px; color: rgb(128, 128, 128); --w: 26px; letter-spacing: -1.27px;">ИСПР</div>
<div class="t ui" style="left: 446px; top: 755.7px; font-size: 11px; color: rgb(128, 128, 128); --w: 20px; letter-spacing: -0.59px;">ВДЛ</div>
<div class="t ui" style="left: 477.5px; top: 755.7px; font-size: 11px; color: rgb(128, 128, 128); --w: 20.5px; letter-spacing: -0.89px;">ЗАМ</div>
<div class="t ui" style="left: 510px; top: 755.7px; font-size: 11px; --w: 57.5px; letter-spacing: 0.02px;">английский</div>
<svg class="a" style="left:588px;top:754px" width="22" height="13" viewBox="0 0 22 13"><rect x="2.5" y="1.5" width="6" height="8" fill="#fff" stroke="#000"></rect><rect x="6.5" y="1.5" width="6" height="8" fill="#fff" stroke="#000"></rect><path d="M1 11.500H14" stroke="#000"></path><path d="M4 4.500H7M4 6.500H7M9 4.500H11M9 6.500H11" stroke="#666"></path><path d="M13 2 L20 11 M20 2 L13 11" stroke="#a00000" stroke-width="2"></path></svg>
<div class="a" style="left:0px;top:771px;width:1280px;height:1px;background:#fff;"></div>
<div class="a" style="left:0px;top:772px;width:1280px;height:28px;background:#d4d0c8;"></div>
<div class="a btn" style="left:2px;top:774px;width:51px;height:22px"></div>
<div class="t ui" style="left: 22px; top: 779.7px; font-size: 11px; font-weight: bold; --w: 27.5px; letter-spacing: 0.53px;">Пуск</div>
<svg class="a" style="left:4px;top:777px" width="16" height="15" viewBox="0 0 16 15"><path d="M2 2 Q4.500 0.500 7.300 2.200 L6.300 7 Q3.600 5.500 1 6.800 Z" fill="#ea4f1c"></path><path d="M8.300 2.700 Q11.300 4.300 15 2.400 L14 7 Q10.800 8.700 7.400 7.300 Z" fill="#62bd24"></path><path d="M0.800 8 Q3.500 6.600 6.100 8.200 L5.200 12.800 Q2.600 11.300 0 12.500 Z" fill="#2e6fe6"></path><path d="M7.200 8.500 Q10.400 10 13.800 8.300 L12.900 12.800 Q9.700 14.500 6.300 13 Z" fill="#f7c21a"></path></svg>
<div class="a btn" style="left:58px;top:774px;width:160px;height:22px"></div>
<svg class="a" style="left:62px;top:778px" width="16" height="16" viewBox="0 0 16 16"><path d="M1.500 3.500 Q1.500 2.500 2.500 2.500 H6 L7.500 4 H13.500 Q14.500 4 14.500 5 V12.500 Q14.500 13.500 13.500 13.500 H2.500 Q1.500 13.500 1.500 12.500 Z" fill="#f6d66a" stroke="#b58a1e"></path><path d="M2 6.500 H14" stroke="#fbe9a4"></path></svg>
<div class="t ui" style="left: 81.5px; top: 779.7px; font-size: 11px; --w: 128px; letter-spacing: 0.07px;">методические рекомен...</div>
<div class="a" style="left:221px;top:774px;width:160px;height:22px;border:1px solid;border-color:#404040 #fff #fff #404040;box-shadow:inset 1px 1px 0 #808080;background-color:#fff;background-image:conic-gradient(#d4d0c8 25%,#fff 0 50%,#d4d0c8 0 75%,#fff 0);background-size:2px 2px"></div>
<svg class="a" style="left:226px;top:779px" width="16" height="16" viewBox="0 0 16 16"><path d="M5.500 3.500 H12 L14.500 6 V15.500 H5.500 Z" fill="#fff" stroke="#7a94c8"></path><rect x="1" y="1" width="9" height="9" fill="#2b4fa8" stroke="#16327a"></rect><path d="M2.800 3.500 L4 8 L5.500 4.500 L7 8 L8.300 3.500" stroke="#fff" fill="none" stroke-width="1.200"></path><path d="M7 12.500H13M7 10.500H13" stroke="#b6c6e6"></path></svg>
<div class="t ui" style="left: 245.5px; top: 780.7px; font-size: 11px; font-weight: bold; --w: 129px; letter-spacing: 0.29px;">Создание таблиц MS...</div>
<div class="a btn" style="left:384px;top:774px;width:160px;height:22px"></div>
<svg class="a" style="left:388px;top:778px" width="16" height="16" viewBox="0 0 16 16"><path d="M5.500 3.500 H12 L14.500 6 V15.500 H5.500 Z" fill="#fff" stroke="#7a94c8"></path><rect x="1" y="1" width="9" height="9" fill="#2b4fa8" stroke="#16327a"></rect><path d="M2.800 3.500 L4 8 L5.500 4.500 L7 8 L8.300 3.500" stroke="#fff" fill="none" stroke-width="1.200"></path><path d="M7 12.500H13M7 10.500H13" stroke="#b6c6e6"></path></svg>
<div class="t ui" style="left: 407.5px; top: 779.7px; font-size: 11px; --w: 126px; letter-spacing: -0.01px;">Вычисления в таблица...</div>
<div class="a btn" style="left:547px;top:774px;width:160px;height:22px"></div>
<svg class="a" style="left:551px;top:778px" width="16" height="16" viewBox="0 0 16 16"><path d="M5.500 3.500 H12 L14.500 6 V15.500 H5.500 Z" fill="#fff" stroke="#7a94c8"></path><rect x="1" y="1" width="9" height="9" fill="#2b4fa8" stroke="#16327a"></rect><path d="M2.800 3.500 L4 8 L5.500 4.500 L7 8 L8.300 3.500" stroke="#fff" fill="none" stroke-width="1.200"></path><path d="M7 12.500H13M7 10.500H13" stroke="#b6c6e6"></path></svg>
<div class="t ui" style="left: 570.5px; top: 779.7px; font-size: 11px; --w: 126px; letter-spacing: -0.01px;">Вычисления в таблица...</div>
<div class="a btn" style="left:710px;top:774px;width:160px;height:22px"></div>
<svg class="a" style="left:714px;top:778px" width="17" height="17" viewBox="0 0 17 17"><circle cx="6.500" cy="7" r="5.500" fill="#3b8fe0" stroke="#1d5cab"></circle><path d="M3 5 Q6 2 9 4 Q7 7 4 8 Z" fill="#6cc04a"></path><path d="M8 4 L16 6 L13.500 15 L6.500 13 Z" fill="#cfd6ea" stroke="#6a78a8"></path><path d="M9 6 L14.500 7.300 L13 13 L8 11.700 Z" fill="#7fa5e8"></path></svg>
<div class="t ui" style="left: 733.5px; top: 779.7px; font-size: 11px; --w: 130px; letter-spacing: -0.07px;">Синхронизируемые объ...</div>
<div class="a" style="left:1113px;top:778px;width:12px;height:16px;background:#0a246a;overflow:hidden"></div>
<div class="t ui" style="left:1114px;top:780.7px;font-size:11px;color:#fff;clip-path:inset(0 3px 0 0);">EN</div>
<div class="a" style="left:1129px;top:774px;width:149px;height:23px;border:1px solid;border-color:#808080 #fff #fff #808080"></div>
<svg class="a" style="left:1134px;top:783px" width="9" height="8" viewBox="0 0 9 8"><path d="M4 0.500 L1 4 L4 7.500 M8 0.500 L5 4 L8 7.500" stroke="#000" stroke-width="1.600" fill="none"></path></svg>
<div class="t ui" style="left: 1242.5px; top: 780.2px; font-size: 11px; --w: 27px; letter-spacing: -0.11px;">18:08</div>
<svg class="a" style="left:1146px;top:777px" width="90" height="18" viewBox="0 0 90 18"><rect x="1.500" y="5.500" width="9" height="7" fill="#3a3f6a" stroke="#5a6fb0"></rect><path d="M3 14.500H9M2 16.500H10" stroke="#6a8ad8" stroke-width="1.500"></path><path d="M12 5 Q13.500 7.500 12 10 M14.500 3.500 Q16.500 7.500 14.500 11" stroke="#707070" fill="none"></path><circle cx="26" cy="5" r="3" fill="#2e9a5c"></circle><path d="M21 15 Q26 6 31 15 Z" fill="#2e9a5c"></path><circle cx="21.500" cy="7" r="2" fill="#4a8ee0"></circle><path d="M18.500 14 Q21.500 8 24.500 14 Z" fill="#4a8ee0"></path><circle cx="30.500" cy="13" r="3.500" fill="#e03a2a"></circle><path d="M29 11.500 L32 14.500 M32 11.500 L29 14.500" stroke="#fff" stroke-width="1.200"></path><path d="M45 1 L52 3.500 V10 Q50.500 15 45 17 Q39.500 15 38 10 V3.500 Z" fill="#7ab51d" stroke="#4f8a10"></path><ellipse cx="45" cy="9.500" rx="2.500" ry="3.500" fill="#2d5c08"></ellipse><path d="M40.500 6 L43 8 M49.500 6 L47 8 M40 10 H42.500 M50 10 H47.500 M41 14 L43 12 M49 14 L47 12" stroke="#2d5c08"></path><rect x="59.500" y="5.500" width="9" height="8" rx="1.500" fill="#d8d8d8" stroke="#000"></rect><path d="M55 9.500 H59 M69 7.500 H72 M69 11.500 H72" stroke="#000" stroke-width="1.500"></path><path d="M74.500 13 V1.500 H88" stroke="#000" fill="none"></path><rect x="75" y="2" width="13" height="11" fill="#808080"></rect><path d="M75 15.500H80M83 15.500H88" stroke="#000" stroke-width="2"></path><path d="M75 13.500H88" stroke="#a0a0a0"></path></svg>
<!-- BOT-END -->
<!-- TB-START -->
<svg class="a" style="left:13px;top:48px" width="16" height="16" viewBox="0 0 16 16"><path d="M2.5 1.500 H10.5 L13.5 4.500 V14.500 H2.5 Z" fill="#fff" stroke="#5a6e9c"></path><path d="M10.5 1.500 V4.500 H13.5" fill="#dfe6f4" stroke="#5a6e9c"></path><path d="M4 13.500H12" stroke="#c9d3ea"></path></svg>
<svg class="a" style="left:36px;top:48px" width="16" height="16" viewBox="0 0 16 16"><path d="M0.500 13.500 V4.500 H2 L3 3.500 H6.500 L7.500 4.500 H11.500 V7" fill="#f2c84b" stroke="#8a6a1a"></path><path d="M0.500 13.500 L3.500 7.500 H15.500 L12 13.500 Z" fill="#fbe08a" stroke="#8a6a1a"></path><path d="M9 3 Q11.500 0.500 14 2.500" stroke="#4a78c8" fill="none" stroke-width="1.300"></path><path d="M12.500 3.500 L15.500 1 L15.200 4.300 Z" fill="#4a78c8"></path></svg>
<svg class="a" style="left:59px;top:48px" width="16" height="16" viewBox="0 0 16 16"><rect x="1.500" y="1.500" width="13" height="13" fill="#5b5fd6" stroke="#2e2f86"></rect><rect x="4" y="2" width="8" height="6" fill="#fff"></rect><rect x="4" y="2" width="8" height="1.500" fill="#c9cdf4"></rect><rect x="4.500" y="10.500" width="7" height="4" fill="#c0c0c8" stroke="#2e2f86"></rect><rect x="5.500" y="11.500" width="2" height="3" fill="#222"></rect></svg>
<svg class="a" style="left:82px;top:48px" width="16" height="16" viewBox="0 0 16 16"><path d="M2.5 1.500 H9.5 L12.5 4.500 V14.500 H2.5 Z" fill="#fff" stroke="#5a6e9c"></path><path d="M9.5 1.500 V4.500 H12.5" fill="#dfe6f4" stroke="#5a6e9c"></path><circle cx="11.500" cy="11.500" r="4" fill="#e03a1e" stroke="#9a1d0a"></circle><rect x="9" y="10.500" width="5" height="2" fill="#fff"></rect></svg>
<svg class="a" style="left:105px;top:48px" width="16" height="16" viewBox="0 0 16 16"><path d="M4.500 7.500 V3.500 L10 0.500 L15.500 3.500 V10.500 H11" fill="#eef2fb" stroke="#6a7fb0"></path><path d="M4.500 3.500 L10 7 L15.500 3.500" fill="none" stroke="#6a7fb0"></path><rect x="12.500" y="5.500" width="2" height="2" fill="#d83a2a"></rect><rect x="0.500" y="8.500" width="12" height="7" fill="#dfe8fa" stroke="#4a66a8"></rect><path d="M2 10.500H5M2 12.500H5M7 10.500H11M7 12.500H11" stroke="#4a66a8"></path></svg>
<div class="a" style="left:128px;top:49px;width:1px;height:15px;background:#a6a399;"></div>
<div class="a" style="left:129px;top:49px;width:1px;height:15px;background:#fff;"></div>
<svg class="a" style="left:133px;top:48px" width="16" height="16" viewBox="0 0 16 16"><path d="M4.500 6 L6 0.500 H14.500 L12.500 6" fill="#fff" stroke="#6a7490"></path><path d="M7 2.500H12.500M6.500 4.500H12" stroke="#9aa5c0"></path><path d="M1.500 7.500 Q1.500 5.500 3.500 5.500 H13.500 Q15.500 5.500 15.500 7.500 V12.500 H1.500 Z" fill="#d6dcec" stroke="#4a5678"></path><rect x="1.500" y="10.500" width="14" height="4" fill="#9fb0d8" stroke="#4a5678"></rect><rect x="10.500" y="8" width="3" height="2.500" fill="#3ec83e"></rect></svg>
<svg class="a" style="left:157px;top:48px" width="16" height="16" viewBox="0 0 16 16"><path d="M1.5 1.500 H8.5 L11.5 4.500 V14.500 H1.5 Z" fill="#fff" stroke="#5a6e9c"></path><path d="M8.5 1.500 V4.500 H11.5" fill="#dfe6f4" stroke="#5a6e9c"></path><circle cx="9.500" cy="8.500" r="3.500" fill="#d8ecfa" stroke="#6a7a9a" stroke-width="1.200"></circle><path d="M12 11.500 L15 14.500" stroke="#d89a2a" stroke-width="2.200"></path></svg>
<div class="a" style="left:179px;top:49px;width:1px;height:15px;background:#a6a399;"></div>
<div class="a" style="left:180px;top:49px;width:1px;height:15px;background:#fff;"></div>
<div class="t ui" style="left:186px;top:47px;font-size:7px;font-weight:bold;letter-spacing:-0.300px">ABC</div>
<svg class="a" style="left:186px;top:48px" width="16" height="16" viewBox="0 0 16 16"><path d="M2.500 9.500 L6.500 13.500 L15 4" stroke="#2e66d8" stroke-width="2.400" fill="none"></path></svg>
<svg class="a" style="left:209px;top:48px" width="16" height="16" viewBox="0 0 16 16"><rect x="0.500" y="2.500" width="4" height="12" fill="#7a70d8" stroke="#4a4290"></rect><rect x="4.500" y="1.500" width="4" height="13" fill="#9a90e8" stroke="#4a4290"></rect><rect x="8.500" y="2.500" width="4" height="12" fill="#e8c060" stroke="#8a6a1a"></rect><circle cx="9.500" cy="8.500" r="3.300" fill="#d8ecfa" stroke="#6a7a9a" stroke-width="1.200"></circle><path d="M12 11.500 L15 14.500" stroke="#d89a2a" stroke-width="2.200"></path></svg>
<div class="a" style="left:231px;top:49px;width:1px;height:15px;background:#a6a399;"></div>
<div class="a" style="left:232px;top:49px;width:1px;height:15px;background:#fff;"></div>
<svg class="a" style="left:238px;top:48px" width="16" height="16" viewBox="0 0 16 16"><path d="M5 1 L9.500 9.500 M11 1 L6.500 9.500" stroke="#6a7490" stroke-width="1.400"></path><circle cx="5" cy="12" r="2.200" fill="none" stroke="#2e5fd0" stroke-width="1.600"></circle><circle cx="11" cy="12" r="2.200" fill="none" stroke="#2e5fd0" stroke-width="1.600"></circle></svg>
<svg class="a" style="left:260px;top:48px" width="16" height="16" viewBox="0 0 16 16"><path d="M1.500 1.500 H6.500 L8.500 3.500 V10.500 H1.500 Z" fill="#fff" stroke="#5a78c0"></path><path d="M3 4.500H7M3 6.500H7M3 8.500H7" stroke="#9ab0e0"></path><path d="M7.500 5.500 H12.500 L15.500 8.500 V15.500 H7.500 Z" fill="#fff" stroke="#2e50a8"></path><path d="M9 9.500H14M9 11.500H14M9 13.500H14" stroke="#5a80d0"></path></svg>
<svg class="a" style="left:284px;top:48px" width="16" height="16" viewBox="0 0 16 16"><rect x="0.500" y="2.500" width="12" height="12" rx="1" fill="#e8b040" stroke="#7a5a1a"></rect><rect x="4" y="0.500" width="5" height="3.500" rx="1" fill="#c8c8d0" stroke="#555"></rect><rect x="6.500" y="7.500" width="9" height="8" fill="#f4f6fc" stroke="#3a4a78"></rect><path d="M8 10.500H13M8 12.500H12" stroke="#8a9ac8"></path></svg>
<svg class="a" style="left:307px;top:48px" width="16" height="16" viewBox="0 0 16 16"><path d="M10 5 L14.500 0.500 L16 2.500 L12 7 Z" fill="#5a5ad0" stroke="#33337a"></path><path d="M7.500 3.500 L12.500 8.500 L10.500 10 L6 5.500 Z" fill="#b8b8c8" stroke="#555"></path><path d="M0.500 9 L6 5 L11 10 L7 15.500 Z" fill="#f0d878" stroke="#8a7420"></path></svg>
<div class="a" style="left:329px;top:49px;width:1px;height:15px;background:#a6a399;"></div>
<div class="a" style="left:330px;top:49px;width:1px;height:15px;background:#fff;"></div>
<svg class="a" style="left:337px;top:48px" width="16" height="16" viewBox="0 0 16 16"><path d="M3 7 Q9 0.500 12 5.500 Q14 10 8.500 14.500" stroke="#2e66d8" stroke-width="2.400" fill="none"></path><path d="M0.500 3 L1.500 9.500 L7.500 7.500 Z" fill="#2e66d8"></path></svg>
<div class="arr" style="left:358px;top:55px;border-top-color:#000"></div>
<svg class="a" style="left:370px;top:48px" width="16" height="16" viewBox="0 0 16 16"><path d="M13 7 Q7 0.500 4 5.500 Q2 10 7.500 14.500" stroke="#b4b4b4" stroke-width="2.400" fill="none"></path><path d="M15.500 3 L14.500 9.500 L8.500 7.500 Z" fill="#b4b4b4"></path></svg>
<div class="arr" style="left:392px;top:55px;border-top-color:#9a9a9a"></div>
<div class="a" style="left:403px;top:49px;width:1px;height:15px;background:#a6a399;"></div>
<div class="a" style="left:404px;top:49px;width:1px;height:15px;background:#fff;"></div>
<svg class="a" style="left:410px;top:48px" width="16" height="16" viewBox="0 0 16 16"><circle cx="7" cy="6" r="5.500" fill="#b8b8b8" stroke="#a0a0a0"></circle><circle cx="5.500" cy="4.500" r="2" fill="#d0d0d0"></circle><rect x="2.500" y="10.500" width="6" height="4" rx="2" fill="none" stroke="#9a9a9a" stroke-width="1.400"></rect><rect x="8.500" y="10.500" width="6" height="4" rx="2" fill="none" stroke="#9a9a9a" stroke-width="1.400"></rect><path d="M6 12.500H11" stroke="#888" stroke-width="1.200"></path></svg>
<svg class="a" style="left:433px;top:48px" width="16" height="16" viewBox="0 0 16 16"><rect x="0.500" y="1.500" width="13" height="12" fill="#fff" stroke="#5a78c0"></rect><path d="M7 1.500V13.500M0.500 7.500H13.500" stroke="#5a78c0"></path><path d="M7 14.500 L14 5 L16 6.500 L9 15.500 Z" fill="#f0c840" stroke="#8a6a1a" stroke-width=".600"></path><path d="M14 5 L15 3.500 L16.500 5 L16 6.500Z" fill="#e05a4a"></path><path d="M6 15.500H9" stroke="#000"></path></svg>
<svg class="a" style="left:456px;top:48px" width="16" height="16" viewBox="0 0 16 16"><rect x="0.500" y="1.500" width="6" height="3" fill="#fff" stroke="#5a78c0"></rect><rect x="0.500" y="8.500" width="6" height="6" fill="#fff" stroke="#5a78c0"></rect><path d="M0.500 11.500H6.500" stroke="#5a78c0"></path><rect x="10.500" y="5.500" width="5" height="3" fill="#7aa8f0" stroke="#2e50a8"></rect><path d="M7.500 7H10.500" stroke="#000"></path><path d="M8.500 5.500V8.500" stroke="#000" stroke-width="1.500"></path></svg>
<svg class="a" style="left:479px;top:48px" width="16" height="16" viewBox="0 0 16 16"><rect x="0.500" y="1.500" width="13" height="12" fill="#fff" stroke="#5a78c0"></rect><rect x="0.500" y="1.500" width="13" height="3" fill="#5a8ae8"></rect><path d="M5 4.500V13.500M9.500 4.500V13.500M0.500 7.500H13.500M0.500 10.500H13.500" stroke="#9ab0e0"></path><rect x="7.500" y="7.500" width="9" height="8.500" fill="#e8f4e0" stroke="#2a7a2a" stroke-width="1.200"></rect><path d="M9.500 9.500 L14.500 14 M14.500 9.500 L9.500 14" stroke="#2a8a2a" stroke-width="1.800"></path></svg>
<svg class="a" style="left:502px;top:48px" width="16" height="16" viewBox="0 0 16 16"><path d="M1 2.500H7M1 4.500H7M1 6.500H7M1 8.500H7M1 10.500H7M1 12.500H7M9 2.500H15M9 4.500H15M9 6.500H15M9 8.500H15M9 10.500H15M9 12.500H15" stroke="#000" stroke-width="1"></path></svg>
<div class="a" style="left:522px;top:45px;width:23px;height:22px;background:#d4d5d8;border:1px solid #0a246a"></div>
<svg class="a" style="left:525px;top:48px" width="16" height="16" viewBox="0 0 16 16"><path d="M6.500 3 L10 1 L14.500 2.500 V7.500 L11 9.500 L6.500 8 Z" fill="#e8c860" stroke="#9a7a20" stroke-width=".700"></path><path d="M1 13 L5 2.500 H7 L10 13 H7.800 L7.200 10.500 H4 L3.300 13 Z" fill="#8a84e0" stroke="#4a44a0" stroke-width=".700"></path><ellipse cx="11.500" cy="11" rx="4" ry="2.600" transform="rotate(-30 11.500 11)" fill="#c8d0dc" stroke="#6a7488"></ellipse></svg>
<div class="a" style="left:547px;top:49px;width:1px;height:15px;background:#a6a399;"></div>
<div class="a" style="left:548px;top:49px;width:1px;height:15px;background:#fff;"></div>
<svg class="a" style="left:554px;top:48px" width="16" height="16" viewBox="0 0 16 16"><rect x="3.500" y="0.500" width="12" height="12" fill="#fff" stroke="#5a78c0"></rect><rect x="3.500" y="0.500" width="12" height="2.500" fill="#5a8ae8"></rect><path d="M9 5.500H14M9 7.500H14M9 9.500H13" stroke="#7a9ad8"></path><circle cx="5" cy="7.500" r="3.500" fill="#d8ecfa" stroke="#6a7a9a" stroke-width="1.200"></circle><path d="M7.500 10.500 L10.500 14" stroke="#d89a2a" stroke-width="2.200"></path></svg>
<svg class="a" style="left:579px;top:48px" width="16" height="16" viewBox="0 0 16 16"><path d="M5 1.500 H11.500 M6.500 1.500 V14 M9.500 1.500 V14" stroke="#000" stroke-width="1.200" fill="none"></path><path d="M6.500 1 H4.500 A3.300 3.300 0 0 0 4.500 7.600 H6.500 Z" fill="#000"></path></svg>
<div class="a" style="left:598px;top:47px;width:56px;height:18px;background:#fff;"></div>
<div class="a" style="left:642px;top:48px;width:11px;height:16px;background:transparent;background:linear-gradient(to bottom,#f4f3f0,#dcd9d2)"></div>
<div class="arr" style="left:645px;top:55px;border-top-color:#000"></div>
<div class="t ui" style="left: 601px; top: 49.7px; font-size: 11px; --w: 28px; letter-spacing: -0.04px;">148%</div>
<svg class="a" style="left:658px;top:48px" width="16" height="16" viewBox="0 0 16 16"><circle cx="8" cy="8" r="6.600" fill="#2e6ae0" stroke="#fff" stroke-width="1"></circle><circle cx="8" cy="8" r="7.100" fill="none" stroke="#3a66c0" stroke-width=".700"></circle><path d="M5.500 6 Q5.500 3.500 8 3.500 Q10.500 3.500 10.500 5.800 Q10.500 7.300 8 8.300 V10" stroke="#fff" stroke-width="1.800" fill="none"></path><circle cx="8" cy="12.300" r="1.100" fill="#fff"></circle></svg>
<div class="a" style="left:680px;top:49px;width:1px;height:15px;background:#a6a399;"></div>
<div class="a" style="left:681px;top:49px;width:1px;height:15px;background:#fff;"></div>
<svg class="a" style="left:688px;top:48px" width="16" height="16" viewBox="0 0 16 16"><path d="M1.500 2.500 Q5 1.500 7.500 3 V13.500 Q5 12 1.500 13 Z M7.500 3 Q10 1.500 13.500 2.500 V13 Q10 12 7.500 13.500" fill="#f4f7fd" stroke="#4a68b0"></path><path d="M3 5.500H6M3 7.500H6M3 9.500H6M9 5.500H12M9 7.500H12M9 9.500H12" stroke="#9ab0e0"></path><path d="M6 13.500 L7.500 15.500 L9 13.500" fill="#4a68b0"></path></svg>
<div class="t ui" style="left: 706px; top: 50.7px; font-size: 11px; --w: 36.5px; letter-spacing: -0.04px;"><u>Ч</u>тение</div>
<div class="t sf" style="left:14px;top:73px;font-size:16px;font-style:italic;font-weight:bold;color:#4a7ad8">A</div>
<div class="t sf" style="left:20px;top:77px;font-size:14px;font-style:italic;font-weight:bold;color:#6a3ab8;text-decoration:underline">A</div>
<div class="a" style="left:34px;top:73px;width:98px;height:18px;background:#fff;"></div>
<div class="a" style="left:120px;top:74px;width:11px;height:16px;background:transparent;background:linear-gradient(to bottom,#f4f3f0,#dcd9d2)"></div>
<div class="arr" style="left:123px;top:81px;border-top-color:#000"></div>
<div class="t ui" style="left: 37px; top: 75.7px; font-size: 11px; --w: 77px; letter-spacing: 0px;">Обычный (веб)</div>
<div class="a" style="left:134px;top:73px;width:126px;height:18px;background:#fff;"></div>
<div class="a" style="left:248px;top:74px;width:11px;height:16px;background:transparent;background:linear-gradient(to bottom,#f4f3f0,#dcd9d2)"></div>
<div class="arr" style="left:251px;top:81px;border-top-color:#000"></div>
<div class="t ui" style="left: 137px; top: 75.7px; font-size: 11px; --w: 62.5px; letter-spacing: -0.2px;">Book Antiqua</div>
<div class="a" style="left:262px;top:73px;width:47px;height:18px;background:#fff;"></div>
<div class="a" style="left:297px;top:74px;width:11px;height:16px;background:transparent;background:linear-gradient(to bottom,#f4f3f0,#dcd9d2)"></div>
<div class="arr" style="left:300px;top:81px;border-top-color:#000"></div>
<div class="t ui" style="left: 265px; top: 75.7px; font-size: 11px; --w: 11px; letter-spacing: -0.62px;">12</div>
<div class="a" style="left:312px;top:75px;width:1px;height:15px;background:#a6a399;"></div>
<div class="a" style="left:313px;top:75px;width:1px;height:15px;background:#fff;"></div>
<div class="t sf" style="left: 320px; top: 74.9px; font-size: 14.5px; font-weight: bold; --w: 13.5px; letter-spacing: -0.84px;">Ж</div>
<div class="t sf" style="left: 344px; top: 74.9px; font-size: 14.5px; font-weight: bold; font-style: italic; --w: 12px; letter-spacing: 2.16px;">К</div>
<div class="t sf" style="left: 369px; top: 73.9px; font-size: 14.5px; font-weight: bold; --w: 10px; letter-spacing: -0.66px;">Ч</div>
<div class="a" style="left:368px;top:88px;width:12px;height:1px;background:#000;"></div>
<div class="a" style="left:387px;top:75px;width:1px;height:15px;background:#a6a399;"></div>
<div class="a" style="left:388px;top:75px;width:1px;height:15px;background:#fff;"></div>
<div class="a" style="left:391px;top:71px;width:23px;height:22px;background:#d4d5d8;border:1px solid #0a246a"></div>
<svg class="a" style="left:394px;top:74px" width="16" height="16" viewBox="0 0 16 16"><path d="M1 2.5H15M1 4.5H11M1 6.5H15M1 8.5H11M1 10.5H15M1 12.5H11" stroke="#000"></path></svg>
<svg class="a" style="left:417px;top:74px" width="16" height="16" viewBox="0 0 16 16"><path d="M1 2.5H15M3 4.5H13M1 6.5H15M3 8.5H13M1 10.5H15M3 12.5H13" stroke="#000"></path></svg>
<svg class="a" style="left:440px;top:74px" width="16" height="16" viewBox="0 0 16 16"><path d="M1 2.5H15M5 4.5H15M1 6.5H15M5 8.5H15M1 10.5H15M5 12.5H15" stroke="#000"></path></svg>
<svg class="a" style="left:463px;top:74px" width="16" height="16" viewBox="0 0 16 16"><path d="M1 2.5H15M1 4.5H15M1 6.5H15M1 8.5H15M1 10.5H15M1 12.5H15" stroke="#000"></path></svg>
<svg class="a" style="left:486px;top:74px" width="16" height="16" viewBox="0 0 16 16"><path d="M4 1 V6.500 M4 9.500 V15" stroke="#2e66d8" stroke-width="1.200"></path><path d="M1.500 3.800 L4 1 L6.500 3.800 M1.500 12.200 L4 15 L6.500 12.200" stroke="#2e66d8" stroke-width="1.300" fill="none"></path><path d="M8.500 3.500H16M8.500 6.500H16M8.500 9.500H16M8.500 12.500H16" stroke="#000"></path></svg>
<div class="arr" style="left:508px;top:82px;border-top-color:#000"></div>
<div class="a" style="left:519px;top:75px;width:1px;height:15px;background:#a6a399;"></div>
<div class="a" style="left:520px;top:75px;width:1px;height:15px;background:#fff;"></div>
<svg class="a" style="left:527px;top:74px" width="16" height="16" viewBox="0 0 16 16"><path d="M6 2.500H15M6 7.500H15M6 12.500H15" stroke="#000" stroke-width="1.100"></path><path d="M1.500 1.500 L2.500 0.500 V4.500 M1 4.500H4 M1 6 H3.500 V7.500 H1.500 V9.500 H4 M1 10.500 H3.500 V12.500 H2 M3.500 12.500 V14.500 H1" stroke="#2e5fd0" fill="none" stroke-width="1"></path></svg>
<svg class="a" style="left:549px;top:74px" width="16" height="16" viewBox="0 0 16 16"><path d="M6 2.500H15M6 7.500H15M6 12.500H15" stroke="#000" stroke-width="1.100"></path><circle cx="2.500" cy="2.500" r="1.500" fill="#2e5fd0"></circle><circle cx="2.500" cy="7.500" r="1.500" fill="#2e5fd0"></circle><circle cx="2.500" cy="12.500" r="1.500" fill="#2e5fd0"></circle></svg>
<svg class="a" style="left:572px;top:74px" width="16" height="16" viewBox="0 0 16 16"><path d="M2 2.500H16M2 11.500H16M2 13.500H16" stroke="#000"></path><path d="M8 5H16M8 8.500H15" stroke="#000" stroke-width="2"></path><path d="M7.500 0V16" stroke="#000" stroke-dasharray="1 1"></path><path d="M6 6.500H1M3 4.500 L0.800 6.500 L3 8.500" stroke="#2e66d8" stroke-width="1.300" fill="none"></path></svg>
<svg class="a" style="left:595px;top:74px" width="16" height="16" viewBox="0 0 16 16"><path d="M2 2.500H16M2 11.500H16M2 13.500H16" stroke="#000"></path><path d="M8 5H16M8 8.500H15" stroke="#000" stroke-width="2"></path><path d="M7.500 0V16" stroke="#000" stroke-dasharray="1 1"></path><path d="M0 6.500H5M3 4.500 L5.200 6.500 L3 8.500" stroke="#2e66d8" stroke-width="1.300" fill="none"></path></svg>
<div class="a" style="left:617px;top:75px;width:1px;height:15px;background:#a6a399;"></div>
<div class="a" style="left:618px;top:75px;width:1px;height:15px;background:#fff;"></div>
<div class="a" style="left:621px;top:71px;width:23px;height:22px;background:#d4d5d8;border:1px solid #0a246a"></div>
<svg class="a" style="left:624px;top:74px" width="16" height="16" viewBox="0 0 16 16"><rect x="1.500" y="1.500" width="13" height="13" fill="none" stroke="#000" stroke-width="1.400"></rect><path d="M8.500 3V14M3 8.500H14" stroke="#444" stroke-dasharray="1 1"></path></svg>
<div class="arr" style="left:646px;top:82px;border-top-color:#000"></div>
<div class="a" style="left:658px;top:74px;width:10px;height:9px;background:#ffff30;"></div>
<div class="t ui" style="left: 658px; top: 73.5px; font-size: 10px; --w: 10px; letter-spacing: -0.56px;">ab</div>
<svg class="a" style="left:664px;top:74px" width="16" height="16" viewBox="0 0 16 16"><path d="M2 9 L8 1.500 L10.500 3.500 L4.500 11 L1.500 11.500Z" fill="#dfe8f8" stroke="#5a6a90"></path><path d="M8 1.500 L9.500 0 L12 2 L10.500 3.500Z" fill="#7a9ae0" stroke="#3a5aa0" stroke-width=".600"></path></svg>
<div class="a" style="left:658px;top:86px;width:16px;height:4px;background:#ffff00;"></div>
<div class="arr" style="left:680px;top:82px;border-top-color:#000"></div>
<div class="t sf" style="left: 692.5px; top: 70.8px; font-size: 17px; color: rgb(46, 80, 168); font-weight: bold; --w: 14px; letter-spacing: 1.72px;">A</div>
<div class="a" style="left:692px;top:86px;width:16px;height:4px;background:#000;"></div>
<div class="arr" style="left:714px;top:82px;border-top-color:#000"></div>
<svg class="a" style="left:727px;top:74px" width="16" height="16" viewBox="0 0 16 16"><path d="M1.500 5.500 L8.500 12 M8.500 5.500 L1.500 12" stroke="#000" stroke-width="1.900"></path></svg>
<div class="t ui" style="left:737px;top:74.9px;font-size:6px;color:#2e5fd0;font-weight:bold;">2</div>
<svg class="a" style="left:750px;top:74px" width="16" height="16" viewBox="0 0 16 16"><path d="M1.500 3.500 L8.500 10 M8.500 3.500 L1.500 10" stroke="#000" stroke-width="1.900"></path></svg>
<div class="t ui" style="left:760px;top:80.9px;font-size:6px;color:#2e5fd0;font-weight:bold;">2</div>
<svg class="a" style="left:82px;top:728px" width="16" height="16" viewBox="0 0 16 16"><path d="M2.500 0.500 V12.500 L5.500 9.500 L7.700 14.500 L9.700 13.600 L7.500 8.800 H11.500 Z" fill="#fff" stroke="#4a68b0" stroke-width="1.100"></path></svg>
<svg class="a" style="left:192px;top:728px" width="16" height="16" viewBox="0 0 16 16"><path d="M1 2.500 L12 13" stroke="#000" stroke-width="1.200"></path></svg>
<svg class="a" style="left:215px;top:728px" width="16" height="16" viewBox="0 0 16 16"><path d="M1.500 3 L10 11" stroke="#000" stroke-width="1.300"></path><path d="M12 13.500 L6.500 11.500 L10.500 7.500 Z" fill="#000"></path></svg>
<svg class="a" style="left:237px;top:728px" width="16" height="16" viewBox="0 0 16 16"><rect x="0.500" y="2.500" width="15" height="11" fill="none" stroke="#000" stroke-width="1.200"></rect></svg>
<svg class="a" style="left:260px;top:728px" width="16" height="16" viewBox="0 0 16 16"><ellipse cx="8" cy="8" rx="7.500" ry="5.300" fill="none" stroke="#000" stroke-width="1.200"></ellipse></svg>
<svg class="a" style="left:283px;top:728px" width="16" height="16" viewBox="0 0 16 16"><rect x="0.500" y="1.500" width="14" height="12" fill="#fff" stroke="#2e50a8"></rect><path d="M8 4.500H13M8 6.500H13M2 8.500H13M2 10.500H13" stroke="#7a9ad8"></path><path d="M2 7 L4.500 2.500 L7 7 M3 5.500H6" stroke="#000" fill="none" stroke-width="1.100"></path></svg>
<svg class="a" style="left:305px;top:728px" width="16" height="16" viewBox="0 0 16 16"><path d="M1 13 L9 0.500 H12.500 L14.500 15.500 H11 L10.500 11.500 H6 L4 15 Z" fill="#4a7ae0" stroke="#1e3a90" stroke-width=".800"></path><path d="M7.500 9 H10.300 L9.800 4.500 Z" fill="#eef3fc"></path></svg>
<svg class="a" style="left:328px;top:728px" width="16" height="16" viewBox="0 0 16 16"><path d="M3 4 A6 6 0 0 1 12 3 M14 7 A6 6 0 0 1 10 13.500 M6 13.500 A6 6 0 0 1 2 8" stroke="#3a5aa8" fill="none" stroke-width="1.100" stroke-dasharray="2 1"></path><circle cx="3" cy="5.500" r="1.800" fill="#f0d040" stroke="#8a7a20" stroke-width=".500"></circle><circle cx="13" cy="5.500" r="1.800" fill="#e04a3a" stroke="#8a2a20" stroke-width=".500"></circle><circle cx="8" cy="14" r="1.800" fill="#6a6ae8" stroke="#2a2a90" stroke-width=".500"></circle></svg>
<svg class="a" style="left:352px;top:728px" width="16" height="16" viewBox="0 0 16 16"><rect x="0.500" y="0.500" width="14" height="14" fill="#eef2fb" stroke="#2e50a8"></rect><circle cx="7.500" cy="5.500" r="3" fill="#707070" stroke="#333"></circle><path d="M2.500 14 Q3 9 7.500 9 Q12 9 12.500 14 Z" fill="#d8501e" stroke="#7a2a0a" stroke-width=".600"></path></svg>
<svg class="a" style="left:375px;top:728px" width="16" height="16" viewBox="0 0 16 16"><rect x="0.500" y="0.500" width="14" height="14" fill="#eef2fb" stroke="#2e50a8"></rect><circle cx="10.500" cy="4.500" r="2" fill="#f08a3a"></circle><path d="M1 13 L5.500 6.500 L9 11 L11 9 L14 13 V14 H1 Z" fill="#8a9cc8" stroke="#4a5a88" stroke-width=".600"></path></svg>
<svg class="a" style="left:404px;top:728px" width="16" height="16" viewBox="0 0 16 16"><path d="M5 0.500 L6 6" stroke="#555" stroke-width="1.200"></path><path d="M2 6.500 L7.500 1.500 L13 6.500 L7.500 11.500 Z" fill="#f4f7fd" stroke="#3a5aa8"></path><path d="M12.500 6 Q16 8 14.500 11.500 Q12.500 9.500 12.500 6Z" fill="#2e66d8"></path></svg>
<div class="a" style="left:404px;top:740px;width:16px;height:4px;background:#ffff00;"></div>
<div class="arr" style="left:426px;top:736px;border-top-color:#000"></div>
<svg class="a" style="left:438px;top:728px" width="16" height="16" viewBox="0 0 16 16"><path d="M15.500 0.500 L9.500 7.500 L8 6 Z" fill="#e8b040" stroke="#8a6a1a" stroke-width=".600"></path><path d="M9.500 7.500 Q7 11 1 11.500 Q5 9.500 8 6 Z" fill="#3a6ad8" stroke="#1e3a90" stroke-width=".600"></path></svg>
<div class="a" style="left:438px;top:740px;width:16px;height:4px;background:#0000ff;"></div>
<div class="arr" style="left:460px;top:736px;border-top-color:#000"></div>
<div class="t sf" style="left: 472.5px; top: 725.3px; font-size: 17px; color: rgb(46, 80, 168); font-weight: bold; --w: 14px; letter-spacing: 1.72px;">A</div>
<div class="a" style="left:472px;top:740px;width:16px;height:4px;background:#000;"></div>
<div class="arr" style="left:494px;top:736px;border-top-color:#000"></div>
<svg class="a" style="left:506px;top:728px" width="16" height="16" viewBox="0 0 16 16"><path d="M0 3.500H15" stroke="#000" stroke-width="1"></path><path d="M0 7H15" stroke="#000" stroke-width="2"></path><path d="M0 11.500H15" stroke="#000" stroke-width="3"></path></svg>
<svg class="a" style="left:529px;top:728px" width="16" height="16" viewBox="0 0 16 16"><path d="M0 3.500H15" stroke="#000" stroke-dasharray="1 1"></path><path d="M0 6.500H15" stroke="#000" stroke-dasharray="3 1"></path><path d="M0 9.500H15" stroke="#000" stroke-dasharray="4 2"></path><path d="M0 12.500H15" stroke="#000" stroke-dasharray="2 2 1 2"></path></svg>
<svg class="a" style="left:552px;top:728px" width="16" height="16" viewBox="0 0 16 16"><path d="M0 2.500H13M2 7.500H15M1 12.500H14" stroke="#000" stroke-width="1.200"></path><path d="M15 2.500 L11.500 0.500 V4.500Z M0.500 7.500 L4 5.500 V9.500 Z M0 12.500 L3.500 10.500 V14.500Z M15 12.500 L11.500 10.500 V14.500Z" fill="#000"></path></svg>
<svg class="a" style="left:575px;top:728px" width="16" height="16" viewBox="0 0 16 16"><rect x="3" y="3.500" width="11" height="11" fill="#8a8a8a" opacity=".7"></rect><rect x="1" y="1" width="11" height="11" fill="#5aaa5a" stroke="#3a7a3a" stroke-width=".600"></rect><rect x="2" y="2" width="5" height="5" fill="#8ad08a" opacity=".8"></rect></svg>
<svg class="a" style="left:598px;top:728px" width="16" height="16" viewBox="0 0 16 16"><path d="M1 5 L5 1 H15 V11 L11 15 H1 Z" fill="#4a9a4a" stroke="#2a6a2a" stroke-width=".700"></path><rect x="1" y="5" width="10" height="10" fill="#6aba6a" stroke="#2a6a2a" stroke-width=".700"></rect><path d="M1 5 L5 1 H15 L11 5 Z" fill="#9ad89a" stroke="#2a6a2a" stroke-width=".700"></path></svg>
<svg class="a" style="left:752px;top:59px" width="7" height="7" viewBox="0 0 7 7"><path d="M1 1.500H6" stroke="#fff"></path><path d="M1.500 4 H6.500 L4 6.800 Z" fill="#fff"></path><path d="M0 0.500H5" stroke="#000"></path><path d="M0 3 H5 L2.500 5.800 Z" fill="#000"></path></svg>
<svg class="a" style="left:774px;top:85px" width="7" height="7" viewBox="0 0 7 7"><path d="M1 1.500H6" stroke="#fff"></path><path d="M1.500 4 H6.500 L4 6.800 Z" fill="#fff"></path><path d="M0 0.500H5" stroke="#000"></path><path d="M0 3 H5 L2.500 5.800 Z" fill="#000"></path></svg>
<svg class="a" style="left:622px;top:739px" width="7" height="7" viewBox="0 0 7 7"><path d="M1 1.500H6" stroke="#fff"></path><path d="M1.500 4 H6.500 L4 6.800 Z" fill="#fff"></path><path d="M0 0.500H5" stroke="#000"></path><path d="M0 3 H5 L2.500 5.800 Z" fill="#000"></path></svg>
<!-- TB-END -->


</div>


</body></html>
